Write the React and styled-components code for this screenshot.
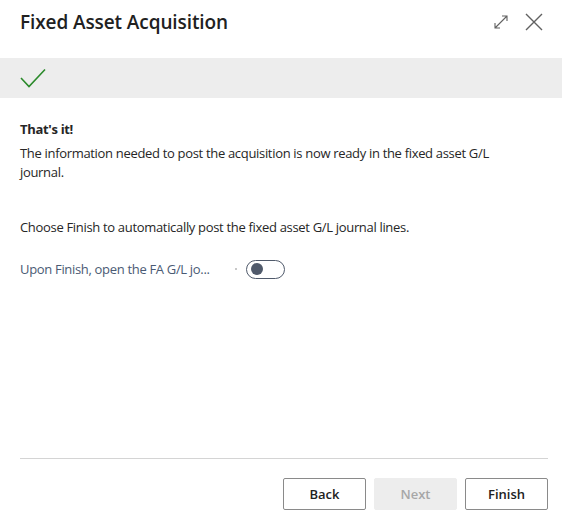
import styled, { createGlobalStyle } from "styled-components";

const Global = createGlobalStyle`
  html, body { margin: 0; padding: 0; background: #ffffff; }
  body { font-family: "Open Sans", "Noto Sans", sans-serif; color: #212121; }
`;

const Dialog = styled.div`
  width: 562px;
  height: 527px;
  display: flex;
  flex-direction: column;
  background: #ffffff;
`;

const Header = styled.div`
  height: 58px;
  display: flex;
  align-items: center;
  justify-content: space-between;
  padding: 0 20px;
  box-sizing: border-box;
`;

const Title = styled.h1`
  margin: 0;
  margin-top: -14px;
  font-size: 19px;
  font-weight: 600;
  color: #212121;
  letter-spacing: -0.1px;
`;

const Tools = styled.div`
  display: flex;
  align-items: center;
  gap: 16px;
  margin-top: -14px;
  margin-right: -1px;
`;

const Band = styled.div`
  height: 40px;
  background: #ededed;
  display: flex;
  align-items: center;
  padding-left: 20px;
`;

const Body = styled.div`
  flex: 1;
  padding: 22px 20px 0;
  font-size: 13px;
  line-height: 19px;
  letter-spacing: -0.32px;
  color: #262626;
`;

const Heading = styled.div`
  font-weight: 700;
  margin-bottom: 5px;
`;

const Para = styled.p`
  margin: 0 0 ${(p) => p.gap || 0}px;
  max-width: 490px;
`;

const FieldRow = styled.div`
  display: flex;
  align-items: center;
  height: 20px;
  margin-top: 22px;
`;

const Label = styled.span`
  color: #4a5a74;
  width: 212px;
  white-space: nowrap;
`;

const Dot = styled.span`
  width: 2px;
  height: 2px;
  background: #c8c8c8;
  margin: 0 9px 0 3px;
`;

const Toggle = styled.span`
  width: 39px;
  height: 19px;
  border: 1px solid #505a6b;
  border-radius: 10px;
  display: flex;
  align-items: center;
  padding-left: 4px;
  box-sizing: border-box;
  &::before {
    content: "";
    width: 12px;
    height: 12px;
    border-radius: 50%;
    background: #505a6b;
  }
`;

const Footer = styled.div`
  margin: 0 14px 0 20px;
  border-top: 1px solid #d4d4d4;
  padding: 19px 0 17px;
  display: flex;
  justify-content: flex-end;
  gap: 8px;
`;

const Button = styled.button`
  width: 83px;
  height: 32px;
  box-sizing: border-box;
  border: 1px solid ${(p) => (p.disabled ? "#ededed" : "#8a8a8a")};
  background: ${(p) => (p.disabled ? "#ededed" : "#ffffff")};
  color: ${(p) => (p.disabled ? "#a7a7a7" : "#212121")};
  border-radius: 2px;
  font-family: "Open Sans", "Noto Sans", sans-serif;
  font-size: 13px;
  font-weight: 600;
  padding: 0;
`;

const IconBox = styled.svg`
  display: block;
`;

export default function App() {
  return (
    <Dialog>
      <Global />
      <Header>
        <Title>Fixed Asset Acquisition</Title>
        <Tools>
          <IconBox width="16" height="16" viewBox="0 0 16 16" fill="none" stroke="#616161" strokeWidth="1.1">
            <path d="M2 14 L14 2 M9 2 H14 V7 M2 9 V14 H7" />
          </IconBox>
          <IconBox width="18" height="18" viewBox="0 0 18 18" fill="none" stroke="#616161" strokeWidth="1.4">
            <path d="M1 1 L17 17 M17 1 L1 17" />
          </IconBox>
        </Tools>
      </Header>
      <Band>
        <IconBox width="26" height="20" viewBox="0 0 26 20" fill="none" stroke="#2b8a2b" strokeWidth="1.6">
          <path d="M1 10 L9 18.5 L25 1.5" />
        </IconBox>
      </Band>
      <Body>
        <Heading>That's it!</Heading>
        <Para gap={36}>
          The information needed to post the acquisition is now ready in the fixed asset G/L journal.
        </Para>
        <Para>Choose Finish to automatically post the fixed asset G/L journal lines.</Para>
        <FieldRow>
          <Label>Upon Finish, open the FA G/L jo...</Label>
          <Dot />
          <Toggle />
        </FieldRow>
      </Body>
      <Footer>
        <Button>Back</Button>
        <Button disabled>Next</Button>
        <Button>Finish</Button>
      </Footer>
    </Dialog>
  );
}
